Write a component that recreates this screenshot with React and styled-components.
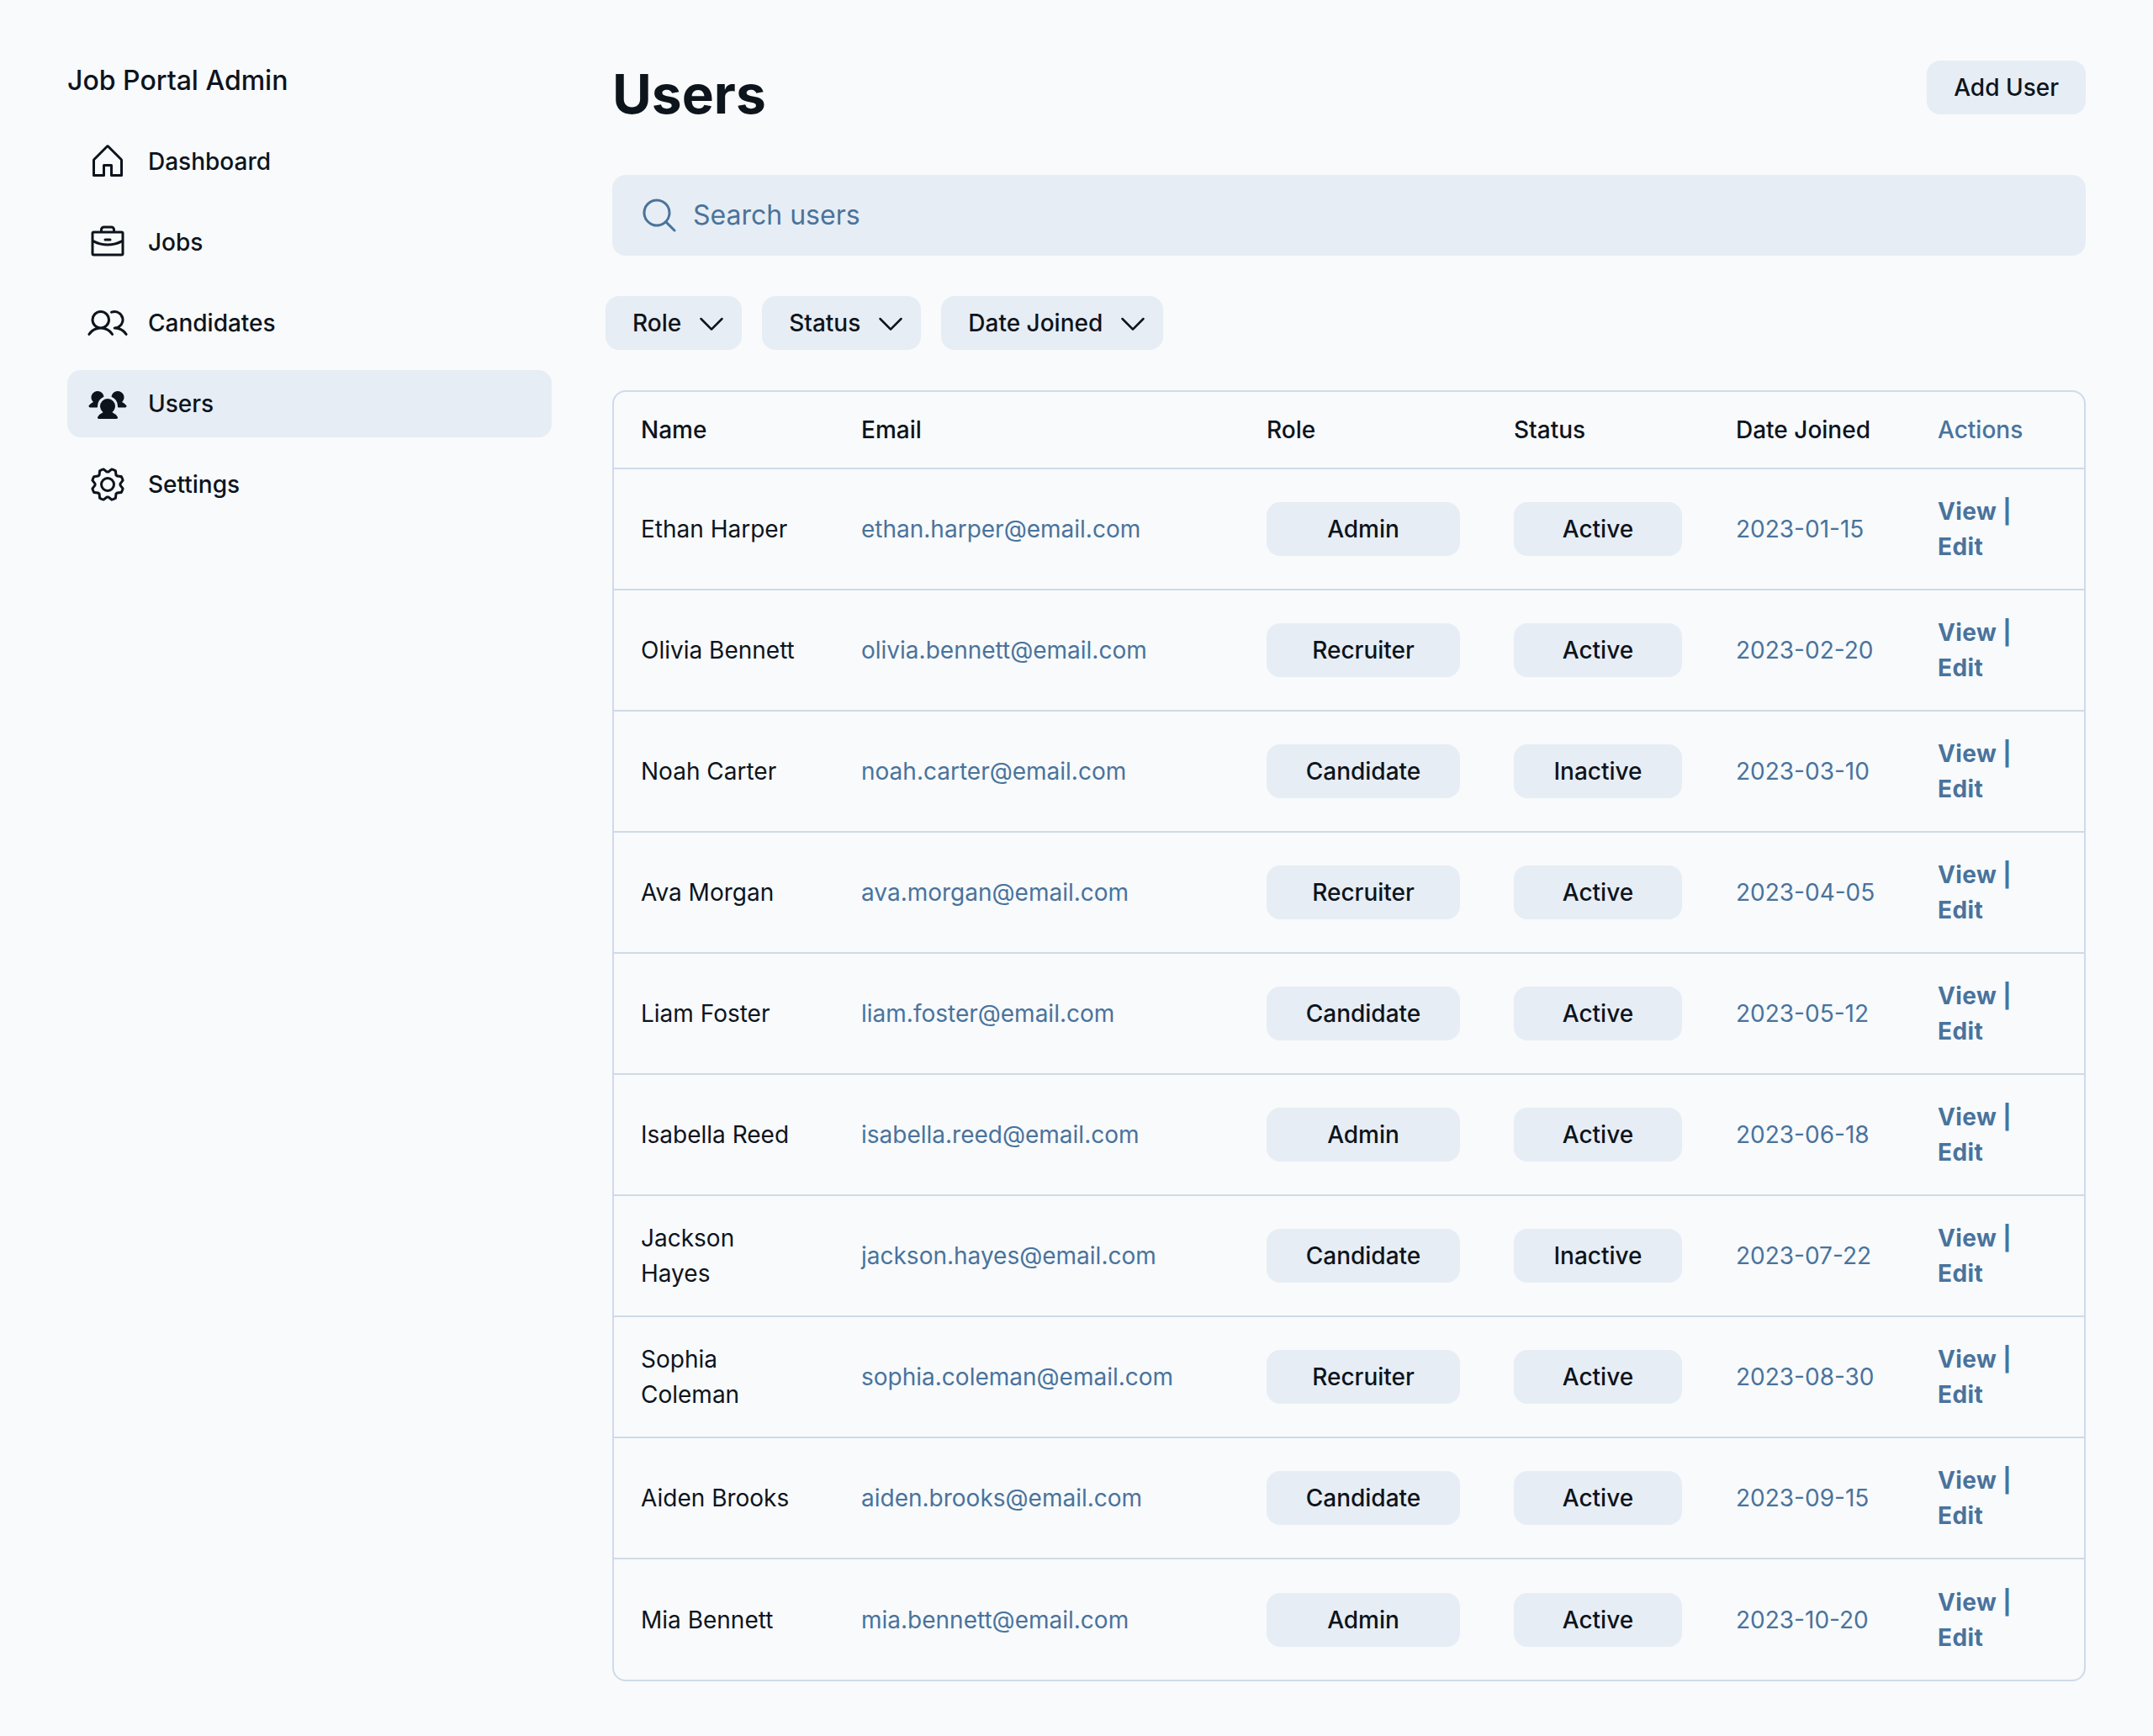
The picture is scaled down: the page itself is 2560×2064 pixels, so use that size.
import React from "react";
import styled, { createGlobalStyle } from "styled-components";
import { PiHouse, PiBriefcase, PiUsers, PiUsersThreeFill, PiGear, PiMagnifyingGlass, PiCaretDown } from "react-icons/pi";

const color = {
  page: "#f8fafc",
  ink: "#0d141c",
  muted: "#49739c",
  fill: "#e7edf4",
  line: "#cedbe8",
};

const GlobalStyle = createGlobalStyle`
  *, *::before, *::after { box-sizing: border-box; }
  body {
    margin: 0;
    background: ${color.page};
    color: ${color.ink};
    font-family: Inter, "Noto Sans", sans-serif;
    font-size: 28px;
    line-height: 42px;
  }
  button, input { font: inherit; color: inherit; }
`;

const Page = styled.div`
  display: flex;
  gap: 8px;
  min-height: 100vh;
  padding: 40px 48px;
`;

const Sidebar = styled.aside`
  display: flex;
  flex-direction: column;
  flex: 0 0 640px;
  gap: 32px;
  padding: 32px;
`;

const Brand = styled.div`
  font-size: 32px;
  font-weight: 500;
  line-height: 48px;
`;

const Nav = styled.nav`
  display: flex;
  flex-direction: column;
  gap: 16px;
`;

const NavLink = styled.a`
  display: flex;
  align-items: center;
  gap: 24px;
  padding: 16px 24px;
  border-radius: 16px;
  background: ${(p) => (p.$active ? color.fill : "transparent")};
  color: inherit;
  font-weight: 500;
  text-decoration: none;

  svg { width: 48px; height: 48px; }
`;

const Main = styled.main`
  display: flex;
  flex-direction: column;
  flex: 1;
  min-width: 0;
`;

const Header = styled.header`
  display: flex;
  align-items: flex-start;
  justify-content: space-between;
  padding: 32px;
`;

const Title = styled.h1`
  margin: 0;
  font-size: 64px;
  font-weight: 700;
  line-height: 80px;
`;

const Button = styled.button`
  display: flex;
  align-items: center;
  gap: 16px;
  height: 64px;
  padding: ${(p) => (p.$menu ? "0 16px 0 32px" : "0 32px")};
  border: 0;
  border-radius: 16px;
  background: ${color.fill};
  font-weight: 500;
  cursor: pointer;

  svg { width: 40px; height: 40px; }
`;

const SearchRow = styled.div`
  padding: 24px 32px;
`;

const SearchBox = styled.label`
  display: flex;
  align-items: center;
  gap: 16px;
  height: 96px;
  padding: 0 32px;
  border-radius: 16px;
  background: ${color.fill};
  color: ${color.muted};

  svg { width: 48px; height: 48px; }
`;

const SearchInput = styled.input`
  flex: 1;
  min-width: 0;
  padding: 0;
  border: 0;
  outline: 0;
  background: transparent;
  color: ${color.ink};
  font-size: 32px;
  line-height: 48px;

  &::placeholder { color: ${color.muted}; opacity: 1; }
`;

const Filters = styled.div`
  display: flex;
  flex-wrap: wrap;
  gap: 24px;
  padding: 24px;
`;

const TableArea = styled.section`
  padding: 24px 32px;
`;

const TableFrame = styled.div`
  overflow: hidden;
  border: 2px solid ${color.line};
  border-radius: 16px;
`;

const Table = styled.table`
  width: 100%;
  table-layout: fixed;
  border-collapse: collapse;
`;

const Col = styled.col`
  width: ${(p) => p.$width}px;
`;

const HeadCell = styled.th`
  padding: 24px 32px;
  color: ${(p) => (p.$muted ? color.muted : color.ink)};
  font-weight: 500;
  text-align: left;
`;

const Row = styled.tr`
  border-top: 2px solid ${color.line};
`;

const Cell = styled.td`
  height: 144px;
  padding: 16px 32px;
  color: ${(p) => (p.$muted ? color.muted : color.ink)};
  font-weight: ${(p) => (p.$bold ? 700 : 400)};
  letter-spacing: ${(p) => (p.$bold ? "0.015em" : "normal")};
`;

const TagButton = styled(Button)`
  justify-content: center;
  width: 100%;
`;

const ActionLink = styled.a`
  color: inherit;
  text-decoration: none;
`;

const navItems = [
  { label: "Dashboard", Icon: PiHouse },
  { label: "Jobs", Icon: PiBriefcase },
  { label: "Candidates", Icon: PiUsers },
  { label: "Users", Icon: PiUsersThreeFill, active: true },
  { label: "Settings", Icon: PiGear },
];

const filters = ["Role", "Status", "Date Joined"];

const columns = [
  { label: "Name", width: 262 },
  { label: "Email", width: 482 },
  { label: "Role", width: 294 },
  { label: "Status", width: 264 },
  { label: "Date Joined", width: 240 },
  { label: "Actions", width: 206, muted: true },
];

const users = [
  ["Ethan Harper", "ethan.harper@email.com", "Admin", "Active", "2023-01-15"],
  ["Olivia Bennett", "olivia.bennett@email.com", "Recruiter", "Active", "2023-02-20"],
  ["Noah Carter", "noah.carter@email.com", "Candidate", "Inactive", "2023-03-10"],
  ["Ava Morgan", "ava.morgan@email.com", "Recruiter", "Active", "2023-04-05"],
  ["Liam Foster", "liam.foster@email.com", "Candidate", "Active", "2023-05-12"],
  ["Isabella Reed", "isabella.reed@email.com", "Admin", "Active", "2023-06-18"],
  ["Jackson Hayes", "jackson.hayes@email.com", "Candidate", "Inactive", "2023-07-22"],
  ["Sophia Coleman", "sophia.coleman@email.com", "Recruiter", "Active", "2023-08-30"],
  ["Aiden Brooks", "aiden.brooks@email.com", "Candidate", "Active", "2023-09-15"],
  ["Mia Bennett", "mia.bennett@email.com", "Admin", "Active", "2023-10-20"],
];

export default function App() {
  return (
    <>
      <GlobalStyle />
      <Page>
        <Sidebar>
          <Brand>Job Portal Admin</Brand>
          <Nav>
            {navItems.map(({ label, Icon, active }) => (
              <NavLink key={label} href="#" $active={active} aria-current={active ? "page" : undefined}>
                <Icon aria-hidden="true" />
                {label}
              </NavLink>
            ))}
          </Nav>
        </Sidebar>
        <Main>
          <Header>
            <Title>Users</Title>
            <Button type="button">Add User</Button>
          </Header>
          <SearchRow>
            <SearchBox htmlFor="user-search">
              <PiMagnifyingGlass aria-hidden="true" />
              <SearchInput id="user-search" type="text" placeholder="Search users" />
            </SearchBox>
          </SearchRow>
          <Filters>
            {filters.map((label) => (
              <Button key={label} type="button" $menu>
                {label}
                <PiCaretDown aria-hidden="true" />
              </Button>
            ))}
          </Filters>
          <TableArea>
            <TableFrame>
              <Table>
                <colgroup>
                  {columns.map((c) => (
                    <Col key={c.label} $width={c.width} />
                  ))}
                </colgroup>
                <thead>
                  <tr>
                    {columns.map((c) => (
                      <HeadCell key={c.label} scope="col" $muted={c.muted}>{c.label}</HeadCell>
                    ))}
                  </tr>
                </thead>
                <tbody>
                  {users.map(([name, email, role, status, joined]) => (
                    <Row key={email}>
                      <Cell>{name}</Cell>
                      <Cell $muted>{email}</Cell>
                      <Cell><TagButton type="button">{role}</TagButton></Cell>
                      <Cell><TagButton type="button">{status}</TagButton></Cell>
                      <Cell $muted>{joined}</Cell>
                      <Cell $muted $bold>
                        <ActionLink href="#">View</ActionLink> | <ActionLink href="#">Edit</ActionLink>
                      </Cell>
                    </Row>
                  ))}
                </tbody>
              </Table>
            </TableFrame>
          </TableArea>
        </Main>
      </Page>
    </>
  );
}
